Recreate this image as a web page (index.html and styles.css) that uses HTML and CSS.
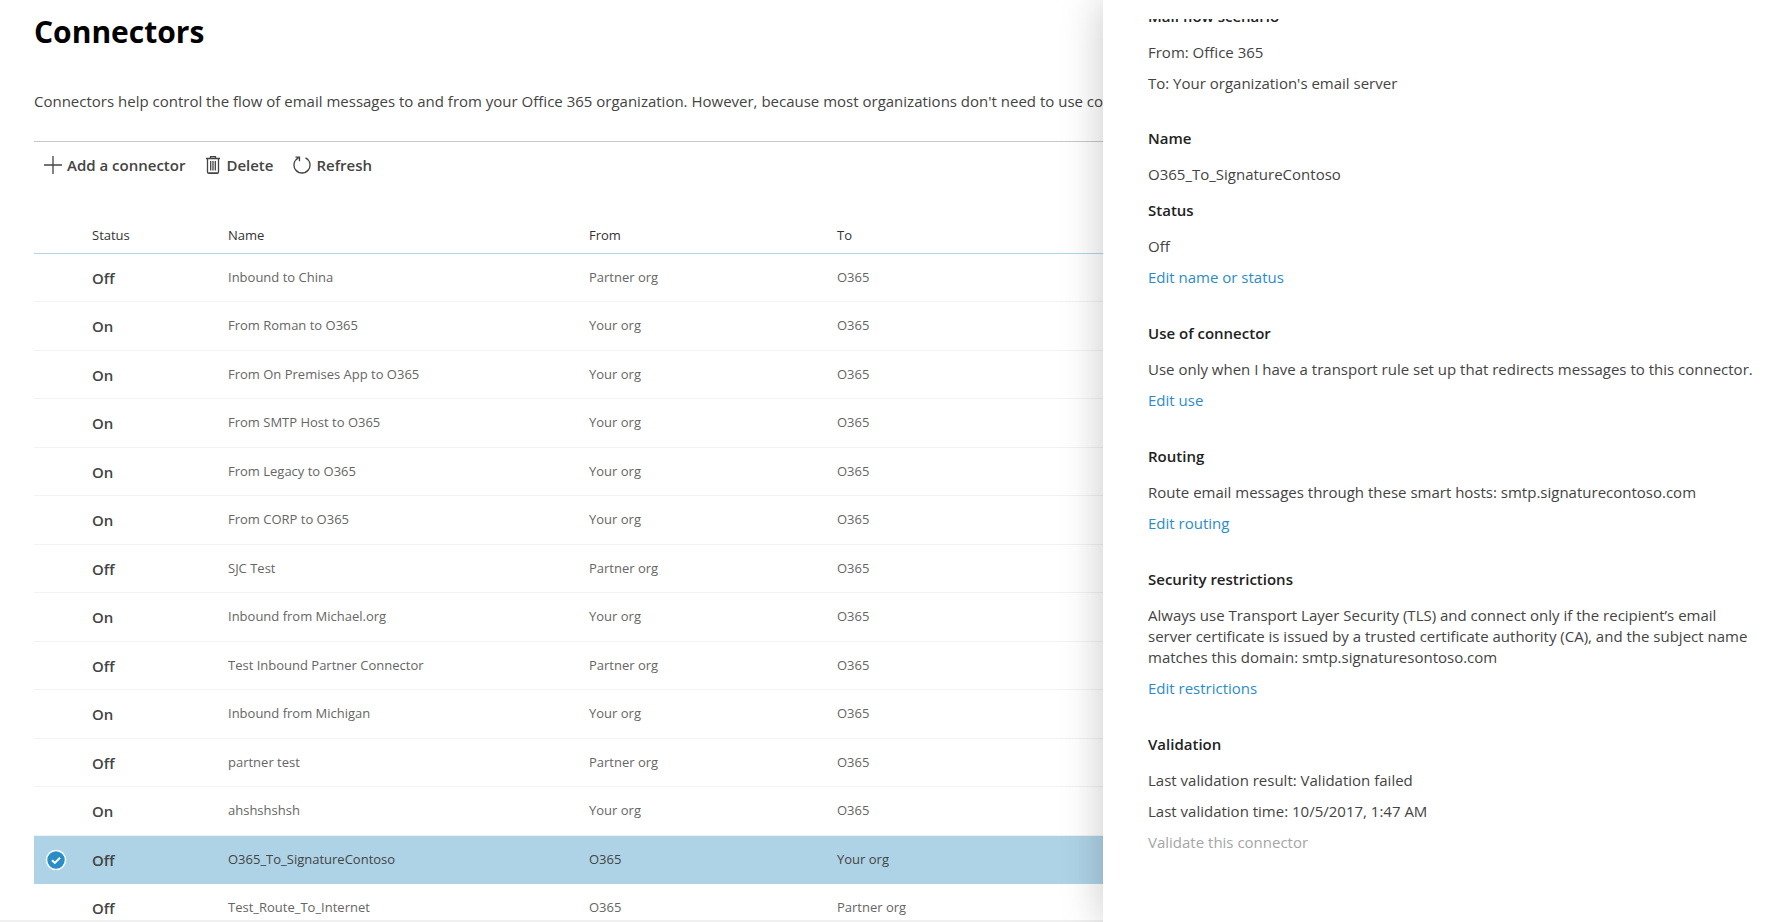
FILE: index.html
```html
<!DOCTYPE html>
<html lang="en">
<head>
<meta charset="utf-8">
<title>Connectors</title>
<link rel="stylesheet" href="styles.css">
</head>
<body>
<main class="page">
  <h1 class="page-title">Connectors</h1>
  <p class="page-intro">Connectors help control the flow of email messages to and from your Office 365 organization. However, because most organizations don't need to use connectors</p>
  <div class="toolbar">
    <button class="tool" type="button">
      <svg class="tool-icon" width="18" height="18" viewBox="0 0 18 18" aria-hidden="true"><path d="M9 0v18M0 9h18" fill="none" stroke="currentColor" stroke-width="1.3"/></svg>
      Add a connector
    </button>
    <button class="tool" type="button">
      <svg class="tool-icon" width="16" height="18" viewBox="0 0 16 18" aria-hidden="true"><path d="M1 2.5h14M5.500 2.500V.7h5v1.800M2.500 2.500v13.500q0 1.300 1.300 1.300h8.400q1.300 0 1.300-1.300V2.500M5.700 5v9.500M8 5v9.500M10.300 5v9.500M3.500 17h9" fill="none" stroke="currentColor" stroke-width="1.300"/></svg>
      Delete
    </button>
    <button class="tool" type="button">
      <svg class="tool-icon" width="18" height="18" viewBox="0 0 18 18" aria-hidden="true"><path d="M12.500 1.800A8 8 0 1 1 5.500 1.800M2.500 1.200h4v4" fill="none" stroke="currentColor" stroke-width="1.300"/></svg>
      Refresh
    </button>
  </div>
  <table class="grid">
    <colgroup><col class="col-check"><col class="col-status"><col class="col-name"><col class="col-from"><col></colgroup>
    <thead>
      <tr><td></td><th scope="col">Status</th><th scope="col">Name</th><th scope="col">From</th><th scope="col">To</th></tr>
    </thead>
    <tbody>
      <tr><td></td><td class="status">Off</td><td>Inbound to China</td><td>Partner org</td><td>O365</td></tr>
      <tr><td></td><td class="status">On</td><td>From Roman to O365</td><td>Your org</td><td>O365</td></tr>
      <tr><td></td><td class="status">On</td><td>From On Premises App to O365</td><td>Your org</td><td>O365</td></tr>
      <tr><td></td><td class="status">On</td><td>From SMTP Host to O365</td><td>Your org</td><td>O365</td></tr>
      <tr><td></td><td class="status">On</td><td>From Legacy to O365</td><td>Your org</td><td>O365</td></tr>
      <tr><td></td><td class="status">On</td><td>From CORP to O365</td><td>Your org</td><td>O365</td></tr>
      <tr><td></td><td class="status">Off</td><td>SJC Test</td><td>Partner org</td><td>O365</td></tr>
      <tr><td></td><td class="status">On</td><td>Inbound from Michael.org</td><td>Your org</td><td>O365</td></tr>
      <tr><td></td><td class="status">Off</td><td>Test Inbound Partner Connector</td><td>Partner org</td><td>O365</td></tr>
      <tr><td></td><td class="status">On</td><td>Inbound from Michigan</td><td>Your org</td><td>O365</td></tr>
      <tr><td></td><td class="status">Off</td><td>partner test</td><td>Partner org</td><td>O365</td></tr>
      <tr><td></td><td class="status">On</td><td>ahshshshsh</td><td>Your org</td><td>O365</td></tr>
      <tr class="selected"><td><label class="pick"><input class="pick-input" type="checkbox" checked aria-label="Select O365_To_SignatureContoso"><svg class="pick-mark" width="22" height="22" viewBox="0 0 22 22" aria-hidden="true"><circle cx="11" cy="11" r="9.500" fill="#2b8dc7" stroke="#fff" stroke-width="1.500"/><path d="M7 11.200l2.800 2.700L15 8.700" fill="none" stroke="#fff" stroke-width="2"/></svg></label></td><td class="status">Off</td><td>O365_To_SignatureContoso</td><td>O365</td><td>Your org</td></tr>
      <tr><td></td><td class="status">Off</td><td>Test_Route_To_Internet</td><td>O365</td><td>Partner org</td></tr>
    </tbody>
  </table>
</main>
<aside class="panel">
  <div class="panel-body">
    <section class="block">
      <h2 class="block-title">Mail flow scenario</h2>
      <p class="line">From: Office 365</p>
      <p class="line">To: Your organization's email server</p>
    </section>
    <section class="block">
      <h2 class="block-title">Name</h2>
      <p class="line">O365_To_SignatureContoso</p>
      <h2 class="block-title block-title-inner">Status</h2>
      <p class="line">Off</p>
      <a class="line link" href="#">Edit name or status</a>
    </section>
    <section class="block">
      <h2 class="block-title">Use of connector</h2>
      <p class="line">Use only when I have a transport rule set up that redirects messages to this connector.</p>
      <a class="line link" href="#">Edit use</a>
    </section>
    <section class="block">
      <h2 class="block-title">Routing</h2>
      <p class="line">Route email messages through these smart hosts: smtp.signaturecontoso.com</p>
      <a class="line link" href="#">Edit routing</a>
    </section>
    <section class="block">
      <h2 class="block-title">Security restrictions</h2>
      <p class="line">Always use Transport Layer Security (TLS) and connect only if the recipient’s email server certificate is issued by a trusted certificate authority (CA), and the subject name matches this domain: smtp.signaturesontoso.com</p>
      <a class="line link" href="#">Edit restrictions</a>
    </section>
    <section class="block">
      <h2 class="block-title">Validation</h2>
      <p class="line">Last validation result: Validation failed</p>
      <p class="line">Last validation time: 10/5/2017, 1:47 AM</p>
      <button class="line validate" type="button" disabled>Validate this connector</button>
    </section>
  </div>
</aside>
</body>
</html>
```
FILE: styles.css
```css
* {
  box-sizing: border-box;
}

body {
  display: flex;
  height: 100vh;
  margin: 0;
  overflow: hidden;
  background: #fff;
  color: #444;
  font-family: "Open Sans", "Noto Sans", sans-serif;
  font-size: 15px;
}

.page {
  flex: 1;
  min-width: 0;
  padding: 8px 0 0 34px;
  overflow: hidden;
  border-bottom: 2px solid #f0f0f0;
}

.page-title {
  margin: 0;
  color: #000;
  font-size: 30px;
  font-weight: 700;
  line-height: 48px;
}

.page-intro {
  margin: 35px 0 30px;
  line-height: 20px;
  white-space: nowrap;
}

.toolbar {
  display: flex;
  gap: 20px;
  height: 71px;
  padding: 11px 10px;
  border-top: 1px solid #c8c8c8;
}

.tool {
  display: flex;
  align-items: center;
  gap: 5px;
  height: 24px;
  padding: 0;
  border: 0;
  background: none;
  color: #444;
  font: inherit;
  font-weight: 600;
}

.tool-icon {
  flex: none;
}

.grid {
  width: 100%;
  border-collapse: separate;
  border-spacing: 0;
  table-layout: fixed;
  font-size: 13px;
  color: #666;
}

.col-check {
  width: 58px;
}

.col-status {
  width: 136px;
}

.col-name {
  width: 361px;
}

.col-from {
  width: 248px;
}

.grid th,
.grid td {
  height: 48px;
  padding: 0 0 2px;
  border-bottom: 1px solid #f2f2f2;
  text-align: left;
  white-space: nowrap;
}

.grid thead th,
.grid thead td {
  height: 42px;
  padding: 5px 0 0;
  border-color: #b0d6ea;
  color: #333;
  font-weight: 400;
}

.grid tbody tr:nth-child(even) td {
  height: 49px;
}

.grid td.status {
  padding: 0;
  color: #444;
  font-size: 15px;
  font-weight: 600;
}

.grid .selected td {
  border-color: #aed3e7;
  background: #aed3e7;
  color: #444;
}

.pick {
  display: grid;
  justify-items: start;
  padding: 2px 0 0 11px;
}

.pick-input,
.pick-mark {
  grid-area: 1 / 1;
}

.pick-input {
  width: 22px;
  height: 22px;
  margin: 0;
  opacity: 0;
}

.panel {
  flex: 0 0 666px;
  z-index: 1;
  padding: 19px 12px 0 45px;
  background: #fff;
  box-shadow: 0 0 40px rgba(0, 0, 0, 0.22);
}

.panel-body {
  height: 100%;
  overflow: hidden;
}

.block {
  margin-bottom: 35px;
}

.block:first-child {
  margin: -13px 0 34px;
}

.block-title {
  margin: 0 0 15px;
  color: #222;
  font-size: 15px;
  font-weight: 600;
  line-height: 21px;
}

.block-title-inner {
  margin-top: 15px;
}

.line {
  display: block;
  margin: 10px 0 0;
  line-height: 21px;
}

.block-title + .line {
  margin-top: 0;
}

.link {
  color: #2b8dc7;
  text-decoration: none;
}

.validate {
  padding: 0;
  border: 0;
  background: none;
  color: #a6a6a6;
  font: inherit;
  line-height: 21px;
}
```
